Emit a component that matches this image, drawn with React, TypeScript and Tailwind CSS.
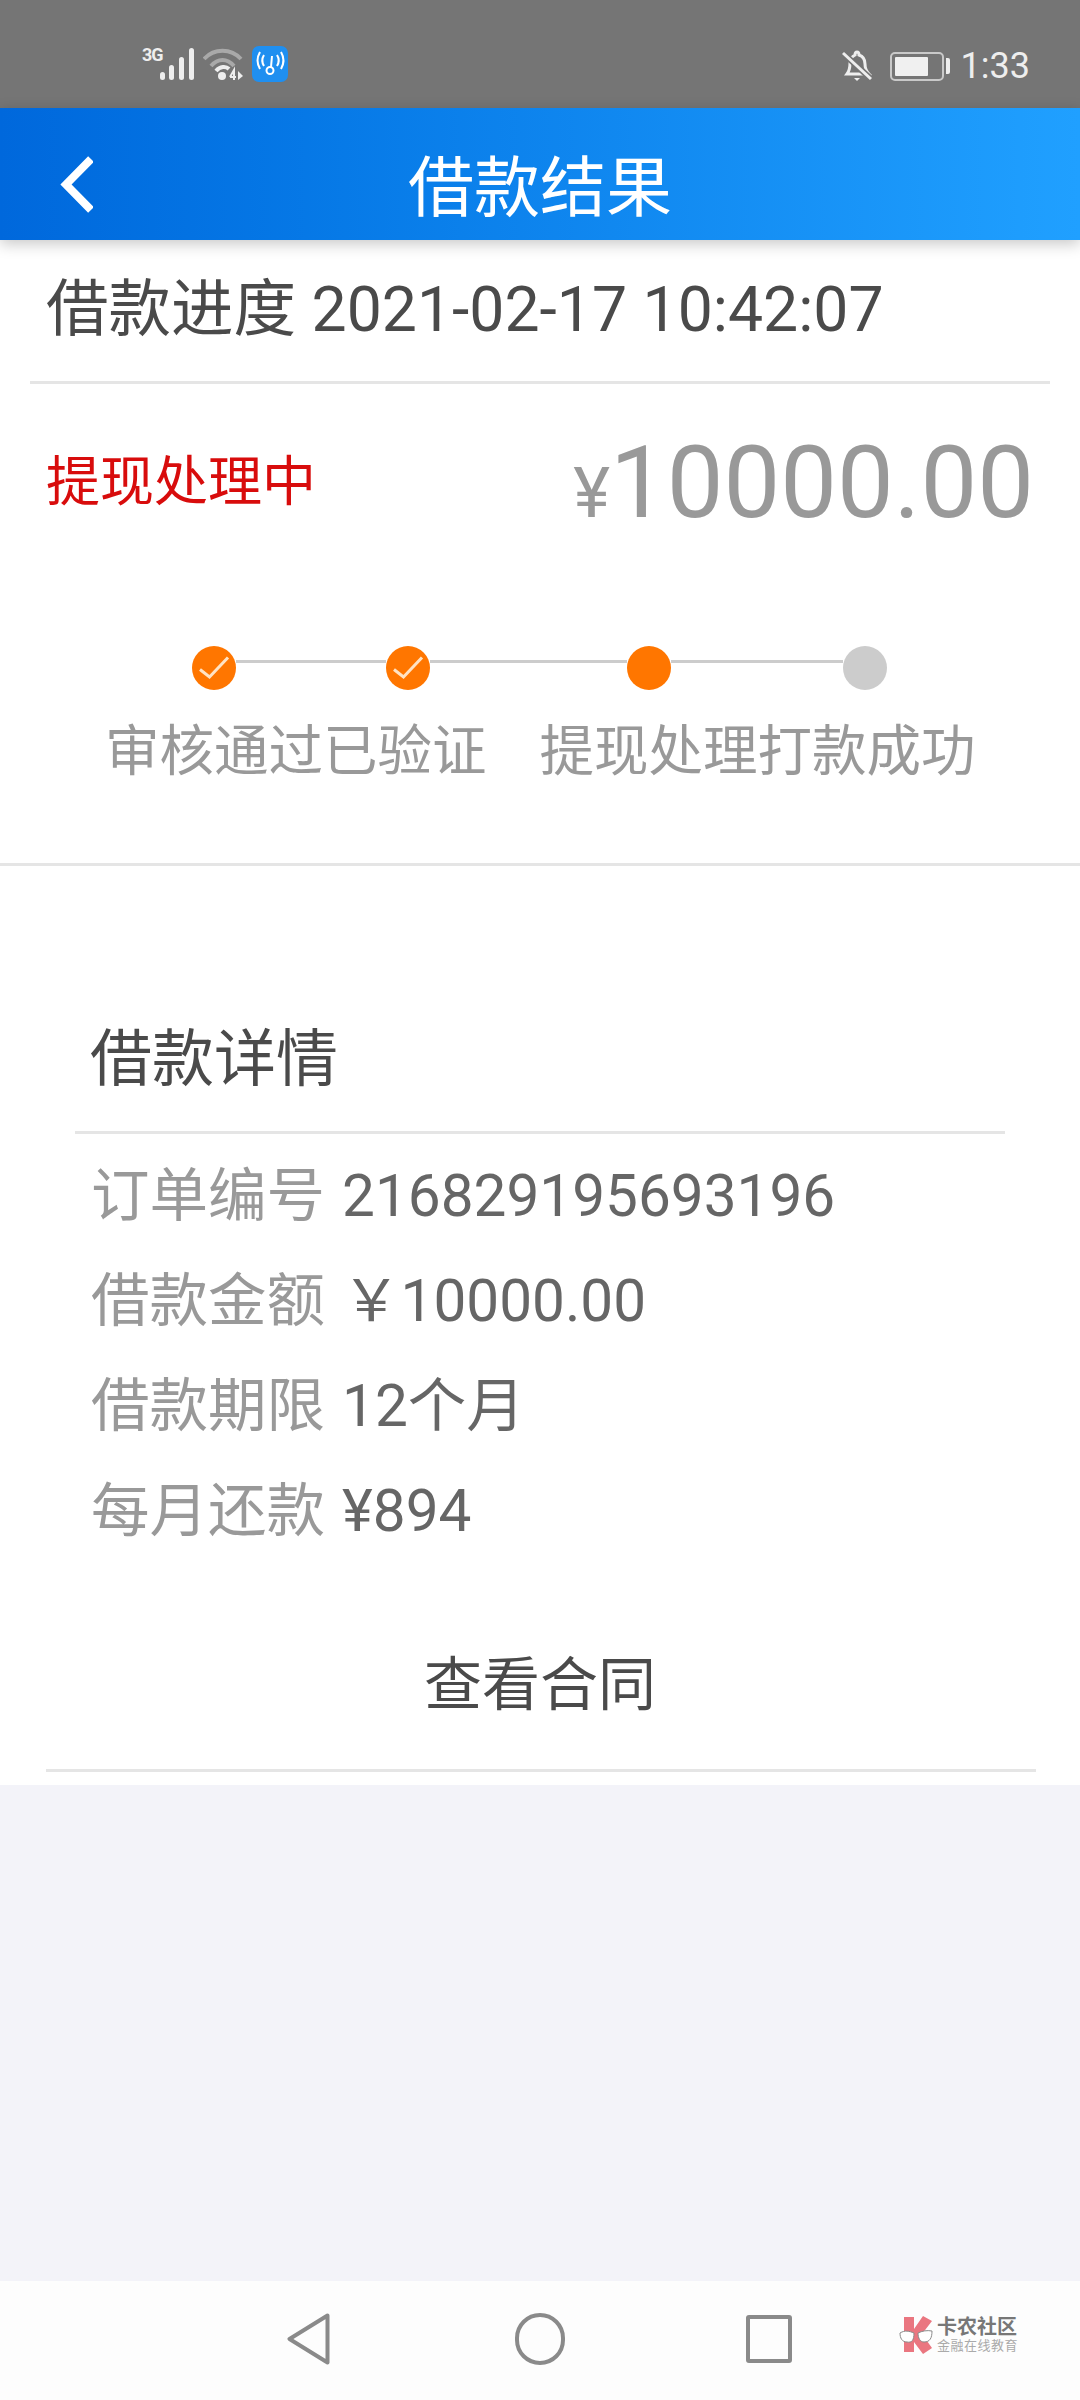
const details = [
  { label: "订单编号", value: "216829195693196" },
  { label: "借款金额", value: "￥10000.00" },
  { label: "借款期限", value: "12个月" },
  { label: "每月还款", value: "¥894" },
];

const Check = () => (
  <svg viewBox="0 0 44 44" className="h-[44px] w-[44px] shrink-0">
    <circle cx="22" cy="22" r="22" fill="#ff7600" />
    <path d="M8 23.5 L17.5 31 L36 11.5" fill="none" stroke="#ffe3c4" strokeWidth="3" />
  </svg>
);

const Line = ({ w }: { w: string }) => <div className={`${w} mb-[14px] h-[3px] bg-[#cccccc]`} />;

const StatusBar = () => (
  <div className="flex h-[108px] items-center justify-between bg-[#757575] pt-[24px] pr-[50px] pl-[142px]">
    <div className="mb-[4px] flex items-center">
      <div className="mb-[18px] w-[17px] font-['Roboto'] text-[18px] leading-[16px] font-bold tracking-[-1px] text-[#eeeeee]">3G</div>
      <svg viewBox="0 0 36 34" className="h-[34px] w-[36px]">
        <g fill="#eeeeee">
          <rect x="1" y="25" width="5" height="8" rx="2.5" />
          <rect x="10" y="18" width="5" height="15" rx="2.5" />
          <rect x="20" y="10" width="5" height="23" rx="2.5" />
          <rect x="30" y="1" width="5" height="32" rx="2.5" />
        </g>
      </svg>
      <svg viewBox="0 0 40 34" className="ml-[8px] h-[34px] w-[40px]">
        <path d="M1 12 C11 1 28 1 38 12" fill="none" stroke="#a9a9a9" strokeWidth="4" />
        <path d="M8 19 C15 11 24 11 31 19" fill="none" stroke="#a9a9a9" strokeWidth="4" />
        <path d="M13 24 C17 19 23 19 26 22" fill="none" stroke="#eeeeee" strokeWidth="4" />
        <circle cx="19" cy="29" r="4" fill="#eeeeee" />
        <path d="M27 30 L31 23 L31 33 M27 30 L33 30" fill="none" stroke="#eeeeee" strokeWidth="2" />
        <path d="M35 24 L40 29 L35 33 Z" fill="#eeeeee" />
      </svg>
      <svg viewBox="0 0 36 36" className="ml-[9px] h-[36px] w-[36px]">
        <rect width="36" height="36" rx="7" fill="#1f8ff0" />
        <g fill="none" stroke="#ffffff" strokeWidth="2">
          <circle cx="18" cy="24.5" r="3.5" />
          <path d="M19 21 L20 10" />
          <path d="M12 9 C9.5 13 9.5 16 12 20" />
          <path d="M8 6 C4.5 12 4.5 17 8 23" />
          <path d="M25 9 C27.5 13 27.5 16 25 20" />
          <path d="M29 6 C32.5 12 32.5 17 29 23" />
        </g>
      </svg>
    </div>
    <div className="flex items-center">
      <svg viewBox="0 0 30 34" className="h-[34px] w-[30px]">
        <path d="M5 25 C8 21 8 18 8 14 C8 9 11 7 13 6 C13 2 17 2 17 6 C20 7 23 10 23 15 C23 19 24 22 27 25 Z" fill="none" stroke="#eeeeee" strokeWidth="3" />
        <path d="M12 29 H18 L15 32 Z" fill="#eeeeee" />
        <path d="M1 4 L29 30" stroke="#757575" strokeWidth="6" />
        <path d="M1 4 L29 30" stroke="#eeeeee" strokeWidth="3" />
      </svg>
      <div className="ml-[18px] flex h-[29px] w-[54px] items-center rounded-[5px] border-2 border-[#c9c9c9] p-[3px]">
        <div className="h-full w-[33px] rounded-[1px] bg-[#f0f0f0]" />
      </div>
      <div className="ml-[2px] h-[16px] w-[4px] rounded-r-[2px] bg-[#eeeeee]" />
      <div className="ml-[11px] font-['Roboto'] text-[36px] leading-none text-[#eeeeee]">1:33</div>
    </div>
  </div>
);

const Header = () => (
  <div className="relative flex h-[132px] items-center justify-center bg-gradient-to-r from-[#0068dc] to-[#20a0ff] pt-[30px] shadow-[0_4px_14px_rgba(0,0,0,0.22)]">
    <svg viewBox="0 0 33 57" className="absolute top-[48px] left-[60px] h-[57px] w-[33px]">
      <path d="M31 3 L6 28.5 L31 54" fill="none" stroke="#ffffff" strokeWidth="8" />
    </svg>
    <div className="text-[66px] leading-none text-white">借款结果</div>
  </div>
);

const Logo = () => (
  <div className="flex items-center">
    <svg viewBox="0 0 36 38" className="h-[38px] w-[36px]">
      <path d="M5 1 H15 V13 L24 0 L33 5 L23 18 L33 32 L24 38 L15 26 V36 H5 Z" fill="#ea7680" />
      <path d="M1 17 C6 14 10 15 15 17 C15 24 13 27 8 26 C3 26 1 22 1 17 Z" fill="#ffffff" stroke="#8a8a8a" strokeWidth="1" />
      <path d="M19 17 C23 15 28 14 33 15 C33 22 31 26 25 26 C21 26 19 22 19 17 Z" fill="#ffffff" stroke="#8a8a8a" strokeWidth="1" />
    </svg>
    <div className="ml-[2px] flex flex-col">
      <div className="text-[20px] leading-[22px] font-bold text-[#777777]">卡农社区</div>
      <div className="text-[13px] leading-[15px] tracking-[0.5px] text-[#aaaaaa]">金融在线教育</div>
    </div>
  </div>
);

const NavBar = () => (
  <div className="flex h-[119px] items-center bg-[#fdfdfd] pb-[4px] pl-[287px]">
    <svg viewBox="0 0 43 52" className="h-[52px] w-[43px]">
      <path d="M40.5 2.5 L2.5 26 L40.5 49.5 Z" fill="none" stroke="#8a8a8a" strokeWidth="4" strokeLinejoin="round" />
    </svg>
    <div className="ml-[185px] h-[52px] w-[50px] rounded-full border-4 border-[#8a8a8a]" />
    <div className="ml-[181px] h-[48px] w-[46px] rounded-[3px] border-4 border-[#8a8a8a]" />
    <div className="mb-[8px] ml-[107px]">
      <Logo />
    </div>
  </div>
);

export default function App() {
  return (
    <div className="flex h-[2400px] w-[1080px] flex-col overflow-hidden bg-[#f3f3f9] font-['Roboto','Noto_Sans_CJK_SC',sans-serif]">
      <StatusBar />
      <Header />
      <div className="bg-white">
        <div className="mx-[30px] flex h-[144px] items-center border-b-[3px] border-[#e5e5e5] pl-[16px] text-[62.5px] leading-none text-[#4a4a4a]">
          借款进度 2021-02-17 10:42:07
        </div>
        <div className="flex h-[197px] items-center justify-between px-[46px]">
          <div className="text-[54px] leading-none text-[#d80c0c]">提现处理中</div>
          <div className="flex items-baseline text-[#999999]">
            <span className="text-[70px] leading-none">¥</span>
            <span className="text-[101px] leading-none">10000.00</span>
          </div>
        </div>
        <div className="flex h-[109px] items-end pl-[192px]">
          <div className="flex items-center">
            <Check />
            <Line w="w-[150px]" />
            <Check />
            <Line w="w-[197px]" />
            <div className="h-[44px] w-[44px] rounded-full bg-[#ff7600]" />
            <Line w="w-[172px]" />
            <div className="h-[44px] w-[44px] rounded-full bg-[#cccccc]" />
          </div>
        </div>
        <div className="flex h-[176px] border-b-[3px] border-[#e5e5e5] pt-[30px] pl-[105px] text-[54.5px] leading-[62px] text-[#999999]">
          <span>审核通过已验证</span>
          <span className="ml-[53px]">提现处理打款成功</span>
        </div>
        <div className="flex h-[235px] items-end pl-[90px] text-[62px] leading-[82px] text-[#4a4a4a]">
          借款详情
        </div>
        <div className="mx-[75px] mt-[30px] h-[3px] w-[930px] bg-[#e5e5e5]" />
        <div className="mt-[10px] flex flex-col pl-[91px]">
          {details.map((d) => (
            <div key={d.label} className="flex h-[105px] items-center gap-[17px] text-[58.5px] leading-none">
              <span className="text-[#999999]">{d.label}</span>
              <span className="text-[#666666]">{d.value}</span>
            </div>
          ))}
        </div>
        <div className="mt-[81px] flex h-[80px] items-center justify-center text-[58px] leading-none text-[#4a4a4a]">
          查看合同
        </div>
        <div className="mx-[46px] mt-[44px] h-[3px] w-[990px] bg-[#e5e5e5]" />
        <div className="h-[13px]" />
      </div>
      <div className="flex-1" />
      <NavBar />
    </div>
  );
}
